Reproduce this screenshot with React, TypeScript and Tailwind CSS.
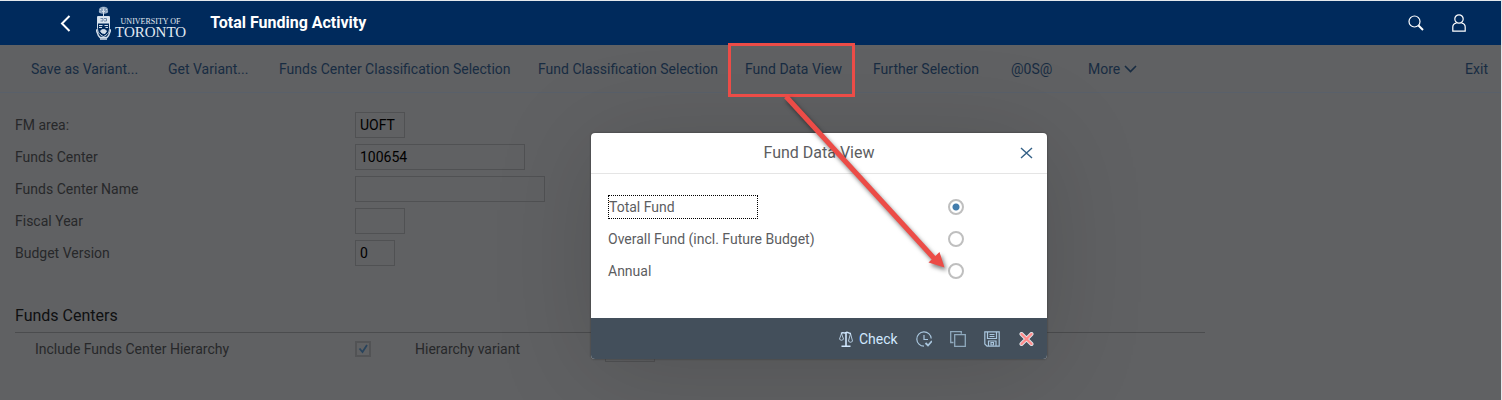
import { useState } from "react";

const menuItems = [
  { label: "Save as Variant...", width: "w-[105px]" },
  { label: "Get Variant...", width: "w-[79px]" },
  { label: "Funds Center Classification Selection", width: "w-[227px]" },
  { label: "Fund Classification Selection", width: "w-[175px]" },
  { label: "Fund Data View", width: "w-[96px]" },
  { label: "Further Selection", width: "w-[106px]" },
  { label: "@0S@", width: "w-[45px]" },
];

const fields = [
  { id: "fm-area", label: "FM area:", value: "UOFT", width: "w-[50px]" },
  { id: "funds-center", label: "Funds Center", value: "100654", width: "w-[170px]" },
  { id: "funds-center-name", label: "Funds Center Name", value: "", width: "w-[190px]" },
  { id: "fiscal-year", label: "Fiscal Year", value: "", width: "w-[50px]" },
  { id: "budget-version", label: "Budget Version", value: "0", width: "w-10" },
];

const views = ["Total Fund", "Overall Fund (incl. Future Budget)", "Annual"];

export default function App() {
  return (
    <div className="relative min-h-screen overflow-hidden border-t border-r border-[#e4e8ec] bg-[#606163] font-['Roboto',sans-serif] text-sm text-[#27282a]">
      <Header />
      <Toolbar />
      <SelectionForm />
      <FundDataDialog />
      <Callout />
    </div>
  );
}

function Header() {
  return (
    <header className="flex h-11 items-center bg-[#002a5c] pr-[35px] text-white">
      <button aria-label="Back" className="ml-[59px] flex h-6 w-4 items-center">
        <svg width="12" height="17" viewBox="0 0 12 17" fill="none" stroke="currentColor" strokeWidth="2">
          <path d="M10.5 1 3 8.500 10.500 16" />
        </svg>
      </button>
      <a href="#home" className="ml-[21px] flex items-center gap-1">
        <Crest />
        <span className="flex flex-col items-center pt-[10px] font-['Liberation_Serif',serif] text-[#e3eaf3]">
          <span className="text-[8px] leading-2">UNIVERSITY OF</span>
          <span className="text-[15px] leading-3">TORONTO</span>
        </span>
      </a>
      <h1 className="ml-6 text-base leading-5 font-bold">Total Funding Activity</h1>
      <div className="ml-auto flex items-center gap-7">
        <button aria-label="Search">
          <svg width="16" height="16" viewBox="0 0 16 16" fill="none" stroke="currentColor">
            <circle cx="6.500" cy="6.500" r="5.500" strokeWidth="1.200" />
            <path d="m10.500 10.500 4.500 4.500" strokeWidth="2" />
          </svg>
        </button>
        <button aria-label="User">
          <svg width="14" height="18" viewBox="0 0 14 18" fill="none" stroke="currentColor" strokeWidth="1.200">
            <circle cx="7" cy="5" r="4.200" />
            <path d="M4.500 9.200C2.200 9.500.8 10.800.8 13v4.200h12.400V13c0-2.200-1.400-3.500-3.700-3.800" />
          </svg>
        </button>
      </div>
    </header>
  );
}

function Crest() {
  return (
    <svg width="15" height="34" viewBox="0 0 15 34" fill="none" stroke="#d3deea">
      {/* tree */}
      <path d="M3 4.500C2.500 2 5.500.5 7.500.7 10 .5 12.500 2 12 4.500c.8 2-1.500 3.500-4.500 3.300C4.500 8 2.200 6.500 3 4.500Z" fill="#8aa2bd" stroke="none" />
      <path d="M4 3.500h1M6.500 2h2M10 3.500h1M6 5.500h3M3.500 6h1M10.500 6h1M7.500 3v7" />
      {/* shield with book, crown and beaver */}
      <path d="M1.500 10.500h12v12c0 4-2.500 6.500-6 8-3.500-1.500-6-4-6-8Z" fill="#002a5c" />
      <path d="M1.500 11h12v6.500h-12Z" fill="#dbe5ef" stroke="none" />
      <path d="M4.500 12.500h2.500v2.500h-2.500M8 12.500h2.500v2.500H8" stroke="#6c87a6" />
      <path d="M3 19.500h3.500m2 0H12M3 21.500h3M9.500 21.500H12" />
      <path d="M4.500 25c1.500-2 4.500-2 6 0l-1.500 2.500-3-.5Z" fill="#d3deea" />
      <path d="M0 23.500c1.500 2 1 5.500 4 8h7c3-2.500 2.500-6 4-8" strokeWidth="1.500" />
      <path d="M4 33h7" strokeWidth="1.500" />
    </svg>
  );
}

function Toolbar() {
  return (
    <nav className="flex h-12 items-center gap-8 border-b border-[#59606a] pr-[13px] pl-[31px] text-[#182c42]">
      {menuItems.map((item) => (
        <button key={item.label} className={`${item.width} text-left whitespace-nowrap`}>
          {item.label}
        </button>
      ))}
      <button className="flex items-center gap-1">
        More
        <svg width="13" height="8" viewBox="0 0 13 8" fill="none" stroke="currentColor" strokeWidth="1.600">
          <path d="m1 1 5.500 5.500L12 1" />
        </svg>
      </button>
      <button className="ml-auto">Exit</button>
    </nav>
  );
}

function SelectionForm() {
  return (
    <main className="px-[15px] pt-[19px]">
      <div className="flex flex-col gap-[6px]">
        {fields.map((field) => (
          <div key={field.id} className="flex items-center">
            <label htmlFor={field.id} className="w-[340px]">
              {field.label}
            </label>
            <input
              id={field.id}
              defaultValue={field.value}
              className={`${field.width} h-[26px] border border-[#505153] px-1 text-black`}
            />
          </div>
        ))}
      </div>

      <section className="mt-[38px] max-w-[1190px]">
        <h2 className="border-b border-[#4b4c4e] pb-1 text-base leading-6 text-[#0f1011]">Funds Centers</h2>
        <div className="flex h-8 items-center pl-5">
          <label htmlFor="hierarchy" className="w-80">
            Include Funds Center Hierarchy
          </label>
          <span className="grid">
            <input
              id="hierarchy"
              type="checkbox"
              defaultChecked
              className="peer col-start-1 row-start-1 size-4 appearance-none border-2 border-[#525355]"
            />
            <svg className="pointer-events-none col-start-1 row-start-1 hidden peer-checked:block" width="16" height="16" viewBox="0 0 16 16" fill="none" stroke="#28435c" strokeWidth="1.800">
              <path d="m4.500 7.500 3 3.500 4.500-7" />
            </svg>
          </span>
          <label htmlFor="variant" className="ml-11 w-[190px]">
            Hierarchy variant
          </label>
          <input id="variant" className="h-[26px] w-[50px] border border-[#505153] px-1 text-black" />
        </div>
      </section>
    </main>
  );
}

function FundDataDialog() {
  const [view, setView] = useState(views[0]);

  return (
    <div
      role="dialog"
      aria-labelledby="dialog-title"
      className="absolute top-[132px] left-[591px] w-[456px] overflow-hidden rounded-[4px] bg-white text-[#5c5d5f] shadow-[0_0_2px_#333,0_10px_100px_#00000026]"
    >
      <div className="grid h-[41px] grid-cols-[1fr_auto_1fr] items-center border-b border-[#e5e5e5]">
        <h2 id="dialog-title" className="col-start-2 text-base">
          Fund Data View
        </h2>
        <button aria-label="Close" className="mr-[14px] justify-self-end text-[#346187]">
          <svg width="13" height="12" viewBox="0 0 13 12" fill="none" stroke="currentColor" strokeWidth="1.400">
            <path d="m1 1 11 10M12 1 1 11" />
          </svg>
        </button>
      </div>

      <div className="flex h-36 flex-col gap-2 pt-[21px] pr-[83px] pl-[17px]">
        {views.map((name) => (
          <label key={name} className="flex h-6 items-center justify-between">
            <span className={name === view ? "w-[150px] border border-dotted border-black leading-[22px]" : ""}>{name}</span>
            <input
              type="radio"
              name="view"
              checked={name === view}
              onChange={() => setView(name)}
              className="size-4 appearance-none rounded-full border-2 border-[#bfbfbf] checked:bg-[radial-gradient(#427cac_0_3px,transparent_4px)]"
            />
          </label>
        ))}
      </div>

      <div className="flex h-[41px] items-center bg-[#434f5b] pr-[13px] pl-[248px] text-[#d1e8ff]">
        <button className="flex items-center gap-[6px]">
          <ScaleIcon />
          Check
        </button>
        <div className="ml-auto flex items-center gap-[18px] text-[#a9c6de]">
          <button aria-label="Schedule">
            <svg width="16" height="16" viewBox="0 0 16 16" fill="none" stroke="currentColor" strokeWidth="1.200">
              <path d="M8 15.200A7.200 7.200 0 1 1 15.200 7.500" />
              <path d="M8 4v4.500h4" />
              <path d="m9.500 12 2.500 2.500 4-4.500" strokeWidth="1.800" />
            </svg>
          </button>
          <button aria-label="Copy" className="text-[#8fa9bd]">
            <svg width="16" height="16" viewBox="0 0 16 16" fill="none" stroke="currentColor" strokeWidth="1.300">
              <path d="M3.500 11.500H.7V.7h10.600v2" />
              <path d="M4.700 3.700h10.600v11.600H4.700Z" />
            </svg>
          </button>
          <button aria-label="Save">
            <svg width="16" height="16" viewBox="0 0 16 16" fill="none" stroke="currentColor" strokeWidth="1.200">
              <path d="M.8.800h14.400v14.400H3L.8 13Z" />
              <path d="M3.500 1v6.500h9V1M5.500 3.500h5M5.500 5.500h5M4.500 15v-5h7.500v5M7 11.500h2.500V14H7Z" />
            </svg>
          </button>
          <button aria-label="Cancel">
            <svg width="16" height="14" viewBox="-1 0 16 14" fill="none" strokeLinecap="round">
              <path d="m2.500 2 10 10M12.500 2l-10 10" stroke="#e3e8ec" strokeWidth="4" />
              <path d="m2.500 2 10 10M12.500 2l-10 10" stroke="#ff8b8b" strokeWidth="2.400" />
            </svg>
          </button>
        </div>
      </div>
    </div>
  );
}

function ScaleIcon() {
  return (
    <svg width="14" height="16" viewBox="0 0 14 16" fill="none" stroke="currentColor">
      <path d="M7 1v14M2.500 15.200h9" strokeWidth="1.600" />
      <path d="M2 2.500C4 .5 5.500 3 7 1.500c1.500-1 3 1 5 1" strokeWidth="1.400" />
      <path d="M2.500 2.500.5 8c.5 1.700 3.500 1.700 4 0ZM11.500 2.500l-2 7.500c.5 1.700 3.500 1.700 4 0Z" strokeWidth=".8" />
    </svg>
  );
}

// red frame around a menu item, with an arrow down to the last option
function Callout() {
  return (
    <svg className="pointer-events-none absolute top-[42px] left-[727px]" width="230" height="235" viewBox="0 0 230 235" aria-hidden="true">
      <path d="M2.500 1.500h124v51h-124Z" fill="none" stroke="#ec4c47" strokeWidth="3" />
      <g className="drop-shadow-[2px_3px_2px_#00000080]">
        <path d="M59 53.500 209 217.500" stroke="#ec4c47" strokeWidth="5" />
        <path d="m217.500 224.500-16-5 11-10.500Z" fill="#ec4c47" />
      </g>
    </svg>
  );
}
